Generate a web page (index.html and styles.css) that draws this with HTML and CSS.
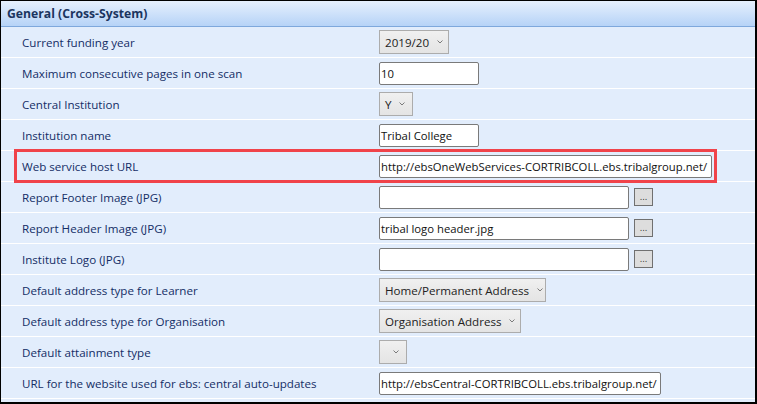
FILE: index.html
```html
<!DOCTYPE html>
<html>
<head>
<meta charset="utf-8">
<link rel="stylesheet" href="styles.css">
</head>
<body>
<div class="window">
  <div class="header">General (Cross-System)</div>
  <div class="rows">
    <div class="row"><div class="label">Current funding year</div><div class="ctl"><div class="select w70">2019/20<svg class="chev" viewBox="0 0 6 4"><polyline points="0.5,0.5 3,3 5.5,0.5"/></svg></div></div></div>
    <div class="row"><div class="label">Maximum consecutive pages in one scan</div><div class="ctl"><div class="input w100">10</div></div></div>
    <div class="row"><div class="label">Central Institution</div><div class="ctl"><div class="select w34">Y<svg class="chev" viewBox="0 0 6 4"><polyline points="0.5,0.5 3,3 5.5,0.5"/></svg></div></div></div>
    <div class="row"><div class="label">Institution name</div><div class="ctl"><div class="input w100">Tribal College</div></div></div>
    <div class="row"><div class="label">Web service host URL</div><div class="ctl"><div class="input w333">http://ebsOneWebServices-CORTRIBCOLL.ebs.tribalgroup.net/</div></div></div>
    <div class="row"><div class="label">Report Footer Image (JPG)</div><div class="ctl"><div class="input w250"></div><div class="btn"><span class="dots">...</span></div></div></div>
    <div class="row"><div class="label">Report Header Image (JPG)</div><div class="ctl"><div class="input w250">tribal logo header.jpg</div><div class="btn"><span class="dots">...</span></div></div></div>
    <div class="row"><div class="label">Institute Logo (JPG)</div><div class="ctl"><div class="input w250"></div><div class="btn"><span class="dots">...</span></div></div></div>
    <div class="row"><div class="label">Default address type for Learner</div><div class="ctl"><div class="select w167">Home/Permanent Address<svg class="chev" viewBox="0 0 6 4"><polyline points="0.5,0.5 3,3 5.5,0.5"/></svg></div></div></div>
    <div class="row"><div class="label">Default address type for Organisation</div><div class="ctl"><div class="select w142">Organisation Address<svg class="chev" viewBox="0 0 6 4"><polyline points="0.5,0.5 3,3 5.5,0.5"/></svg></div></div></div>
    <div class="row"><div class="label">Default attainment type</div><div class="ctl"><div class="select w28"><svg class="chev" viewBox="0 0 6 4"><polyline points="0.5,0.5 3,3 5.5,0.5"/></svg></div></div></div>
    <div class="row"><div class="label">URL for the website used for ebs: central auto-updates</div><div class="ctl"><div class="input w282">http://ebsCentral-CORTRIBCOLL.ebs.tribalgroup.net/</div></div></div>
    <div class="row row-top"><div class="label"></div><div class="ctl"><div class="select w37"></div></div></div>
  </div>
  <div class="highlight"></div>
</div>
</body>
</html>
```

FILE: styles.css
```css
html, body {
  margin: 0;
  padding: 0;
  background: #000;
}
.window {
  position: relative;
  width: 757px;
  height: 404px;
  box-sizing: border-box;
  border-style: solid;
  border-color: #000;
  border-width: 1px 2px 2px 1px;
  background: #e2edfc;
  overflow: hidden;
  font-family: "Open Sans", "Noto Sans", sans-serif;
  font-size: 11.6px;
}
.header {
  height: 25px;
  border-bottom: 1px solid #7ea8dc;
  background: linear-gradient(#e6f0fd, #b6d3f7);
  color: #1b355f;
  font-weight: bold;
  font-size: 12.2px;
  line-height: 25px;
  padding-left: 6px;
}
.rows {
  display: flex;
  flex-direction: column;
}
.row {
  height: 30px;
  border-bottom: 1px solid #ffffff;
  display: grid;
  grid-template-columns: 378px 1fr;
  align-items: center;
  flex: none;
}
.row-top {
  align-items: start;
}
.row-top .ctl {
  padding-top: 3px;
}
.label {
  padding-left: 21px;
  color: #142e66;
  font-weight: 500;
  white-space: nowrap;
}
.ctl {
  display: flex;
  align-items: center;
  gap: 5px;
}
.select {
  height: 24px;
  box-sizing: border-box;
  border: 1px solid #acacac;
  background: linear-gradient(#f0f0f0, #e4e4e4);
  color: #222;
  display: flex;
  align-items: center;
  justify-content: space-between;
  padding: 0 7px 0 5px;
  white-space: nowrap;
}
.chev {
  width: 6px;
  height: 4px;
  fill: none;
  stroke: #7a7a7a;
  stroke-width: 1;
  margin-left: 8px;
  flex: none;
}
.input {
  height: 23px;
  box-sizing: border-box;
  border: 1px solid #7a7a7a;
  border-radius: 2px;
  background: #fff;
  color: #111;
  font-size: 11.3px;
  line-height: 21px;
  padding-left: 1px;
  white-space: nowrap;
  overflow: hidden;
}
.btn {
  width: 19px;
  height: 18px;
  box-sizing: border-box;
  border: 1.5px solid #707070;
  background: #dddddd;
  display: flex;
  justify-content: center;
  align-items: flex-end;
  padding-bottom: 3px;
}
.dots {
  color: #333;
  font-family: "DejaVu Sans", sans-serif;
  font-size: 8px;
  line-height: 8px;
  letter-spacing: 0;
}
.w70 { width: 70px; }
.w34 { width: 34px; }
.w28 { width: 28px; }
.w37 { width: 37px; }
.w100 { width: 100px; }
.w142 { width: 142px; }
.w167 { width: 167px; }
.w250 { width: 250px; }
.w282 { width: 282px; }
.w333 { width: 333px; }
.highlight {
  position: absolute;
  left: 13px;
  top: 148px;
  width: 703px;
  height: 34px;
  box-sizing: border-box;
  border: 3px solid #f0434a;
}
```
